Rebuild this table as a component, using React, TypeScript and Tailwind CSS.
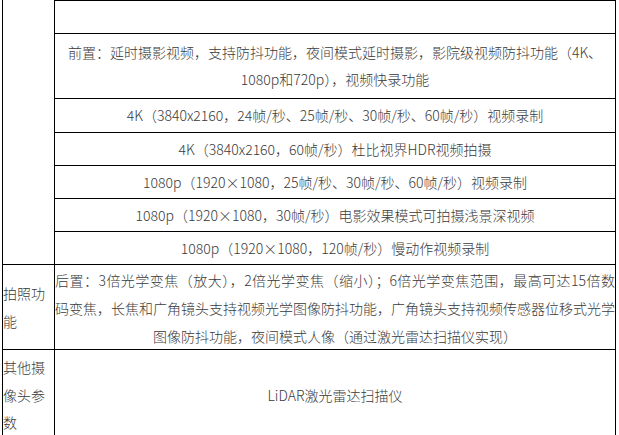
import React from 'react';

const videoRows = [
  '4K（3840x2160，24帧/秒、25帧/秒、30帧/秒、60帧/秒）视频录制',
  '4K（3840x2160，60帧/秒）杜比视界HDR视频拍摄',
  '1080p（1920×1080，25帧/秒、30帧/秒、60帧/秒）视频录制',
  '1080p（1920×1080，30帧/秒）电影效果模式可拍摄浅景深视频',
  '1080p（1920×1080，120帧/秒）慢动作视频录制',
];

// heights follow the grid lines in the screenshot
const rowHeights = ['h-[34px]', 'h-[33px]', 'h-[33px]', 'h-[33px]', 'h-[33px]'];

export default function App() {
  return (
    <div
      className="min-h-[435px] bg-white text-[14px] font-light text-[#3a3a3a] overflow-hidden"
      style={{ fontFamily: '"Noto Sans CJK SC", "Noto Sans", sans-serif' }}
    >
      <div className="ml-[2px] w-[614px] border-x border-black">
        {/* video section, label cell starts above the visible area */}
        <div className="flex">
          <div className="w-[52px] shrink-0 border-r border-black" />
          <div className="flex-1 flex flex-col">
            <div className="h-[33px] border-t border-black" />
            <div className="h-[65px] border-t border-black flex flex-col justify-center items-center leading-[27px]">
              <div>前置：延时摄影视频，支持防抖功能，夜间模式延时摄影，影院级视频防抖功能（4K、</div>
              <div>1080p和720p），视频快录功能</div>
            </div>
            {videoRows.map((text, i) => (
              <div
                key={i}
                className={`${rowHeights[i]} border-t border-black flex items-center justify-center`}
              >
                {text}
              </div>
            ))}
          </div>
        </div>

        {/* photo section */}
        <div className="flex h-[85px] border-t border-black">
          <div className="w-[52px] shrink-0 border-r border-black flex items-center leading-[28px]">
            拍照功能
          </div>
          <div className="flex-1 flex flex-col justify-center leading-[28px] pt-[1px]">
            <div className="text-justify [text-align-last:justify]">
              后置：3倍光学变焦（放大），2倍光学变焦（缩小）；6倍光学变焦范围，最高可达15倍数
            </div>
            <div className="text-justify [text-align-last:justify]">
              码变焦，长焦和广角镜头支持视频光学图像防抖功能，广角镜头支持视频传感器位移式光学
            </div>
            <div className="text-center">图像防抖功能，夜间模式人像（通过激光雷达扫描仪实现）</div>
          </div>
        </div>

        {/* other camera params */}
        <div className="flex h-[92px] border-t border-black">
          <div className="w-[52px] shrink-0 border-r border-black flex items-center leading-[27.5px]">
            其他摄像头参数
          </div>
          <div className="flex-1 flex items-center justify-center">LiDAR激光雷达扫描仪</div>
        </div>
      </div>
    </div>
  );
}
